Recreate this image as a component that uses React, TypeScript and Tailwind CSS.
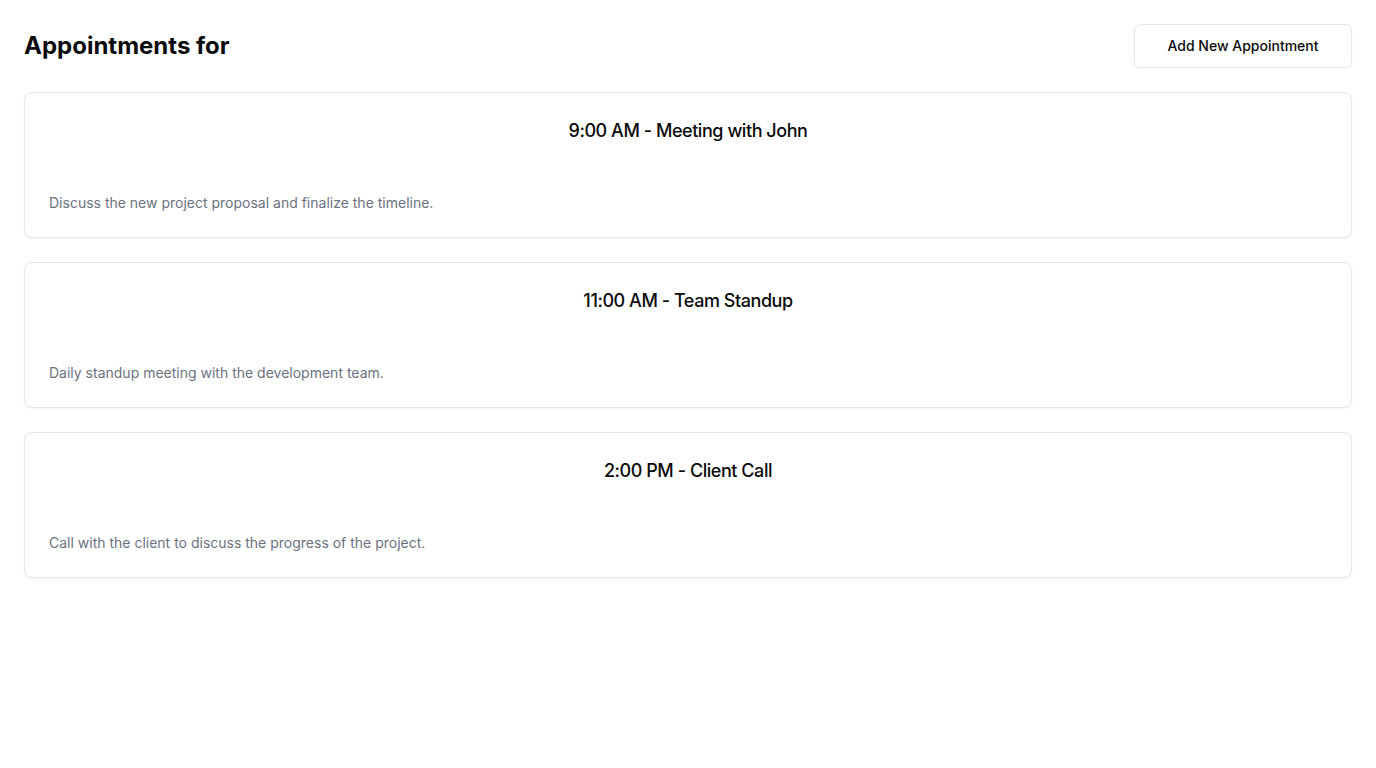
import React from "react";

const items = [
  { title: "9:00 AM - Meeting with John", desc: "Discuss the new project proposal and finalize the timeline." },
  { title: "11:00 AM - Team Standup", desc: "Daily standup meeting with the development team." },
  { title: "2:00 PM - Client Call", desc: "Call with the client to discuss the progress of the project." },
];

export default function App() {
  return (
    <div className="min-h-screen bg-white p-6 text-[#0a0a0a]" style={{ fontFamily: "Inter, 'Noto Sans', sans-serif" }}>
      <div className="mb-6 flex items-center justify-between">
        <h1 className="text-2xl font-bold">Appointments for</h1>
        <button className="flex h-11 w-[218px] items-center justify-center rounded-md border border-[#e5e7eb] bg-white text-sm font-medium text-[#0a0a0a] shadow-[0_1px_2px_rgba(0,0,0,0.03)]">
          Add New Appointment
        </button>
      </div>
      <div className="flex flex-col gap-6">
        {items.map((it) => (
          <div key={it.title} className="rounded-lg border border-[#e5e7eb] bg-white shadow-[0_1px_2px_rgba(0,0,0,0.05)]">
            <div className="p-6">
              <h3 className="text-center text-lg font-medium leading-7 tracking-tight">{it.title}</h3>
            </div>
            <div className="p-6">
              <p className="text-sm leading-5 text-[#6b7280]">{it.desc}</p>
            </div>
          </div>
        ))}
      </div>
    </div>
  );
}
